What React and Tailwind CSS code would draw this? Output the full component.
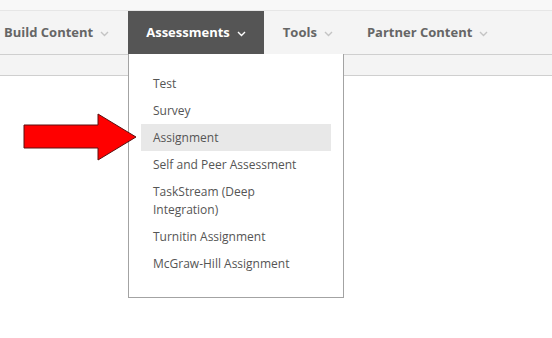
import React from "react";

function Chevron({ color }) {
  return (
    <svg width="9" height="6" viewBox="0 0 9 6" className="ml-[7px] mt-[2px]">
      <polyline points="1,1 4.5,4.5 8,1" fill="none" stroke={color} strokeWidth="1.4" />
    </svg>
  );
}

function NavItem({ label, active, first }) {
  return (
    <div
      className={
        "flex items-center h-full pr-[18px] " +
        (first ? "pl-[4px] " : "pl-[18px] ") +
        (active ? "bg-[#555555] text-white" : "text-[#666666]")
      }
    >
      <span className="text-[13px] font-bold">{label}</span>
      <Chevron color={active ? "#ffffff" : "#c4c4c4"} />
    </div>
  );
}

const items = [
  "Test",
  "Survey",
  "Assignment",
  "Self and Peer Assessment",
  "TaskStream (Deep Integration)",
  "Turnitin Assignment",
  "McGraw-Hill Assignment",
];

export default function App() {
  return (
    <div
      className="relative w-[552px] h-[338px] bg-white overflow-hidden"
      style={{ fontFamily: '"Open Sans", "Liberation Sans", sans-serif' }}
    >
      <div className="h-[11px] bg-[#f8f8f8] border-b border-[#e6e6e6]" />
      <div className="h-[44px] bg-[#f4f4f4] border-b border-[#cfcfcf] flex items-stretch">
        <NavItem label="Build Content" first />
        <div className="pl-[1px] flex">
          <NavItem label="Assessments" active />
        </div>
        <div className="pl-[1px] flex">
          <NavItem label="Tools" />
        </div>
        <div className="pl-[12px] flex">
          <NavItem label="Partner Content" first />
        </div>
      </div>
      <div className="h-[21px] bg-[#f4f4f4] border-b border-[#cfcfcf]" />

      <div className="absolute left-[128px] top-[54px] w-[216px] h-[244px] bg-white border border-t-0 border-[#a3a3a3] pt-[16px] px-[12px]">
        {items.map((it) => (
          <div
            key={it}
            className={
              "pl-[12px] pr-[20px] py-[4.5px] leading-[18px] text-[12px] text-[#555555] " +
              (it === "Assignment" ? "bg-[#e8e8e8]" : "")
            }
          >
            {it}
          </div>
        ))}
      </div>

      <svg className="absolute left-0 top-0" width="552" height="338">
        <polygon
          points="24,125 98,125 98,114 136,137 98,160 98,148 24,148"
          fill="#ff0000"
          stroke="#5a1010"
          strokeWidth="1"
        />
      </svg>
    </div>
  );
}
